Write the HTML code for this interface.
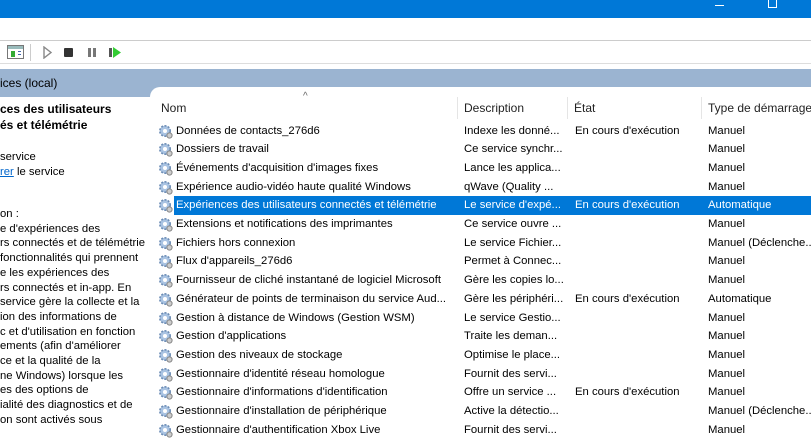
<!DOCTYPE html>
<html><head><meta charset="utf-8"><style>
*{margin:0;padding:0;box-sizing:border-box}
body{width:811px;height:430px;overflow:hidden;background:#fff;font-family:"Liberation Sans",sans-serif;font-size:11.3px;color:#000;position:relative}
.a{position:absolute;white-space:nowrap}
.row{position:absolute;left:155px;width:656px;height:18.7px;line-height:18.7px;margin-top:1.5px}
.row span{position:absolute;white-space:nowrap;overflow:hidden}
.row .n{left:21px}.row .d{left:309px;width:104px}.row .e{left:420px}.row .t{left:553px}
.sel{background:#0078d7;color:#fff}
.g{position:absolute;left:3px;top:2px;width:15px;height:15px}
.lt{position:absolute;left:0;font-size:11.3px;line-height:14.7px}
.h{font-size:12px;color:#222}
</style></head><body>
<div class="a" style="left:0;top:0;width:811px;height:18px;background:#0078d7"></div>
<div class="a" style="left:715px;top:5px;width:9px;height:1px;background:#fff"></div>
<div class="a" style="left:768px;top:0;width:9px;height:8px;border:1px solid #fff;border-top:none"></div>
<div class="a" style="left:0;top:40px;width:811px;height:1px;background:#ccc"></div>
<div class="a" style="left:0;top:41px;width:811px;height:22px;background:#fff"></div>
<div class="a" style="left:0;top:63px;width:811px;height:1px;background:#ddd"></div>
<svg class="a" style="left:7px;top:45px" width="17" height="15"><rect x="0.5" y="0.5" width="16" height="13" fill="#fff" stroke="#777"/><rect x="1" y="1" width="15" height="3" fill="#9bb"/><rect x="4" y="6" width="4" height="6" fill="#3a3"/><rect x="11" y="6" width="3" height="1" fill="#46a"/><rect x="11" y="9" width="3" height="1" fill="#46a"/></svg>
<div class="a" style="left:30px;top:44px;width:1px;height:17px;background:#ccc"></div>
<svg class="a" style="left:42px;top:46px" width="90" height="13"><path d="M2 1 L9 6.5 L2 12Z" fill="none" stroke="#888" stroke-width="1.4"/><rect x="22" y="2" width="9" height="9" rx="1" fill="#333"/><rect x="46" y="2" width="3" height="9" fill="#777"/><rect x="51" y="2" width="3" height="9" fill="#777"/><rect x="67" y="2" width="3" height="9" fill="#555"/><path d="M71 1 L79 6.5 L71 12Z" fill="#3c3"/></svg>
<div class="a" style="left:0;top:69px;width:811px;height:28px;background:#9bb4d1"></div>
<div class="a" style="left:0;top:73px;font-size:12px;color:#000;line-height:20px">ices (local)</div>
<div class="a" style="left:150px;top:87px;width:661px;height:12px;background:#fff;border-top-left-radius:10px"></div>
<div class="lt a" style="top:101px;font-weight:bold;font-size:12px;line-height:16px">ces des utilisateurs<br>és et télémétrie</div>
<div class="lt a" style="top:150px">service<br><span style="color:#0066cc;text-decoration:underline">rer</span> le service</div>
<div class="lt a" style="top:207px">on :<br>e d'expériences des<br>rs connectés et de télémétrie<br>fonctionnalités qui prennent<br>e les expériences des<br>rs connectés et in-app. En<br>service gère la collecte et la<br>ion des informations de<br>c et d'utilisation en fonction<br>ements (afin d'améliorer<br>ce et la qualité de la<br>ne Windows) lorsque les<br>es des options de<br>ialité des diagnostics et de<br>on sont activés sous</div>
<div class="a" style="left:303px;top:91px;font-size:10px;color:#666">^</div>
<div class="a h" style="left:161px;top:101px">Nom</div>
<div class="a" style="left:457px;top:97px;width:1px;height:22px;background:#e5e5e5"></div>
<div class="a h" style="left:464px;top:101px">Description</div>
<div class="a" style="left:567px;top:97px;width:1px;height:22px;background:#e5e5e5"></div>
<div class="a h" style="left:574px;top:101px">État</div>
<div class="a" style="left:701px;top:97px;width:1px;height:22px;background:#e5e5e5"></div>
<div class="a h" style="left:708px;top:101px">Type de démarrage</div>
<svg width="0" height="0" style="position:absolute"><defs><symbol id="gr" viewBox="0 0 15 15"><circle cx="7" cy="7" r="5.2" fill="#a9c3e2" stroke="#6d8db5" stroke-width="1.6" stroke-dasharray="2 1.4"/><circle cx="7" cy="7" r="2" fill="#fff"/><circle cx="11.5" cy="11.5" r="2.6" fill="#ccc" stroke="#888" stroke-width="1"/></symbol></defs></svg>
<div class="row" style="top:120px"><svg class="g"><use href="#gr"/></svg><span class="n">Données de contacts_276d6</span><span class="d">Indexe les donné...</span><span class="e">En cours d'exécution</span><span class="t">Manuel</span></div>
<div class="row" style="top:138.7px"><svg class="g"><use href="#gr"/></svg><span class="n">Dossiers de travail</span><span class="d">Ce service synchr...</span><span class="t">Manuel</span></div>
<div class="row" style="top:157.4px"><svg class="g"><use href="#gr"/></svg><span class="n">Événements d'acquisition d'images fixes</span><span class="d">Lance les applica...</span><span class="t">Manuel</span></div>
<div class="row" style="top:176.1px"><svg class="g"><use href="#gr"/></svg><span class="n">Expérience audio-vidéo haute qualité Windows</span><span class="d">qWave (Quality ...</span><span class="t">Manuel</span></div>
<div class="row" style="top:194.8px"><svg class="g"><use href="#gr"/></svg><div class="sel" style="position:absolute;left:19px;top:0;width:637px;height:18.7px"></div><span class="n" style="color:#fff">Expériences des utilisateurs connectés et télémétrie</span><span class="d" style="color:#fff">Le service d'expé...</span><span class="e" style="color:#fff">En cours d'exécution</span><span class="t" style="color:#fff">Automatique</span></div>
<div class="row" style="top:213.5px"><svg class="g"><use href="#gr"/></svg><span class="n">Extensions et notifications des imprimantes</span><span class="d">Ce service ouvre ...</span><span class="t">Manuel</span></div>
<div class="row" style="top:232.2px"><svg class="g"><use href="#gr"/></svg><span class="n">Fichiers hors connexion</span><span class="d">Le service Fichier...</span><span class="t">Manuel (Déclenche...</span></div>
<div class="row" style="top:250.9px"><svg class="g"><use href="#gr"/></svg><span class="n">Flux d'appareils_276d6</span><span class="d">Permet à Connec...</span><span class="t">Manuel</span></div>
<div class="row" style="top:269.6px"><svg class="g"><use href="#gr"/></svg><span class="n">Fournisseur de cliché instantané de logiciel Microsoft</span><span class="d">Gère les copies lo...</span><span class="t">Manuel</span></div>
<div class="row" style="top:288.3px"><svg class="g"><use href="#gr"/></svg><span class="n">Générateur de points de terminaison du service Aud...</span><span class="d">Gère les périphéri...</span><span class="e">En cours d'exécution</span><span class="t">Automatique</span></div>
<div class="row" style="top:307px"><svg class="g"><use href="#gr"/></svg><span class="n">Gestion à distance de Windows (Gestion WSM)</span><span class="d">Le service Gestio...</span><span class="t">Manuel</span></div>
<div class="row" style="top:325.7px"><svg class="g"><use href="#gr"/></svg><span class="n">Gestion d'applications</span><span class="d">Traite les deman...</span><span class="t">Manuel</span></div>
<div class="row" style="top:344.4px"><svg class="g"><use href="#gr"/></svg><span class="n">Gestion des niveaux de stockage</span><span class="d">Optimise le place...</span><span class="t">Manuel</span></div>
<div class="row" style="top:363.1px"><svg class="g"><use href="#gr"/></svg><span class="n">Gestionnaire d'identité réseau homologue</span><span class="d">Fournit des servi...</span><span class="t">Manuel</span></div>
<div class="row" style="top:381.8px"><svg class="g"><use href="#gr"/></svg><span class="n">Gestionnaire d'informations d'identification</span><span class="d">Offre un service ...</span><span class="e">En cours d'exécution</span><span class="t">Manuel</span></div>
<div class="row" style="top:400.5px"><svg class="g"><use href="#gr"/></svg><span class="n">Gestionnaire d'installation de périphérique</span><span class="d">Active la détectio...</span><span class="t">Manuel (Déclenche...</span></div>
<div class="row" style="top:419.2px"><svg class="g"><use href="#gr"/></svg><span class="n">Gestionnaire d'authentification Xbox Live</span><span class="d">Fournit des servi...</span><span class="t">Manuel</span></div>
</body></html>
